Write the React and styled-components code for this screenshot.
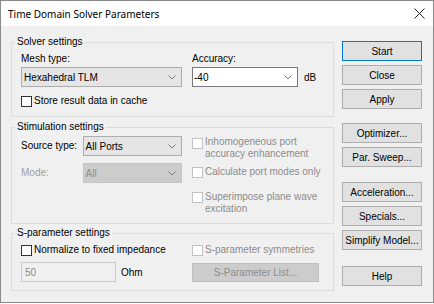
import React from "react";
import styled, { createGlobalStyle } from "styled-components";

const GlobalStyle = createGlobalStyle`
  html, body {
    margin: 0;
    padding: 0;
    background: #ffffff;
  }
  body {
    font-family: "Liberation Sans", Arial, sans-serif;
    font-size: 10px;
    color: #000;
  }
`;

const Window = styled.div`
  width: 434px;
  height: 303px;
  box-sizing: border-box;
  border: 1px solid #8a8a8a;
  background: #f0f0f0;
  display: flex;
  flex-direction: column;
`;

const TitleBar = styled.div`
  height: 25px;
  flex: none;
  background: #ffffff;
  display: flex;
  align-items: center;
  justify-content: space-between;
  padding: 0 8px 0 7px;
  font-family: "Noto Sans", "Liberation Sans", sans-serif;
  font-size: 10px;
`;

const Body = styled.div`
  flex: 1;
  display: flex;
  gap: 8px;
  padding-left: 10px;
`;

const LeftColumn = styled.div`
  width: 323px;
  padding-top: 9px;
  display: flex;
  flex-direction: column;
`;

const ButtonColumn = styled.div`
  width: 80px;
  padding-top: 15px;
  display: flex;
  flex-direction: column;
`;

const Group = styled.fieldset`
  margin: ${(p) => p.$top || 0}px 0 0 0;
  padding: 0;
  border: 1px solid #dcdcdc;
  min-inline-size: 0;
`;

const Legend = styled.legend`
  margin-left: 3px;
  padding: 0 2px;
  line-height: 14px;
`;

const GroupBody = styled.div`
  display: grid;
  grid-template-columns: 161px 1fr;
  column-gap: 10px;
  padding: ${(p) => p.$pad};
`;

const Label = styled.div`
  line-height: 14px;
  color: ${(p) => (p.$disabled ? "#a0a0a0" : "#000")};
  white-space: nowrap;
`;

const Row = styled.div`
  display: flex;
  align-items: center;
  gap: ${(p) => p.$gap || 0}px;
  margin-top: ${(p) => p.$top || 0}px;
  grid-column: ${(p) => (p.$span ? "1 / -1" : "auto")};
`;

const Combo = styled.div`
  box-sizing: border-box;
  width: ${(p) => p.$w}px;
  height: 20px;
  display: flex;
  align-items: center;
  justify-content: space-between;
  padding: 0 5px 0 ${(p) => (p.$variant === "edit" ? 1 : 2)}px;
  border: 1px solid
    ${(p) =>
      p.$variant === "edit" ? "#7a7a7a" : p.$variant === "disabled" ? "#c4c4c4" : "#adadad"};
  background: ${(p) =>
    p.$variant === "edit" ? "#ffffff" : p.$variant === "disabled" ? "#cccccc" : "#e5e5e5"};
  color: ${(p) => (p.$variant === "disabled" ? "#8c8c8c" : "#000")};
  white-space: nowrap;
`;

const TextField = styled.div`
  box-sizing: border-box;
  width: 95px;
  height: 20px;
  display: flex;
  align-items: center;
  padding-left: 3px;
  border: 1px solid #cccccc;
  background: #f0f0f0;
  color: #8c8c8c;
`;

const Check = styled.div`
  display: flex;
  align-items: flex-start;
  gap: 2px;
  margin-top: ${(p) => p.$top || 0}px;
  line-height: ${(p) => p.$lh || 14}px;
  color: ${(p) => (p.$disabled ? "#8c8c8c" : "#000")};
  white-space: nowrap;
`;

const Box = styled.span`
  flex: none;
  box-sizing: border-box;
  width: 11px;
  height: 11px;
  margin-top: ${(p) => p.$mt || 1}px;
  border: 1px solid ${(p) => (p.$disabled ? "#c2c2c2" : "#333333")};
  background: #ffffff;
`;

const ChecksColumn = styled.div`
  grid-column: 2;
  display: flex;
  flex-direction: column;
`;

const StimLeft = styled.div`
  display: flex;
  flex-direction: column;
  gap: 7px;
`;

const StimLabel = styled(Label)`
  width: 62px;
`;

const Button = styled.div`
  box-sizing: border-box;
  width: ${(p) => p.$w || 80}px;
  height: ${(p) => p.$h || 20}px;
  margin-top: ${(p) => p.$top || 0}px;
  display: flex;
  align-items: center;
  justify-content: center;
  border: 1px solid
    ${(p) => (p.$focus ? "#0078d7" : p.$disabled ? "#bfbfbf" : "#adadad")};
  background: ${(p) => (p.$disabled ? "#cccccc" : "#e1e1e1")};
  color: ${(p) => (p.$disabled ? "#8c8c8c" : "#000")};
  white-space: nowrap;
`;

const Chevron = () => (
  <svg width="8" height="5" viewBox="0 0 8 5">
    <polyline points="0.5,0.5 4,4 7.5,0.5" fill="none" stroke="#7a7a7a" strokeWidth="1" />
  </svg>
);

const CloseIcon = () => (
  <svg width="11" height="11" viewBox="0 0 11 11">
    <path d="M0.5 0.5 L10.5 10.5 M10.5 0.5 L0.5 10.5" stroke="#222" strokeWidth="1" />
  </svg>
);

export default function App() {
  return (
    <>
      <GlobalStyle />
      <Window>
        <TitleBar>
          <span>Time Domain Solver Parameters</span>
          <CloseIcon />
        </TitleBar>
        <Body>
          <LeftColumn>
            <Group>
              <Legend>Solver settings</Legend>
              <GroupBody $pad="3px 0 8px 9px">
                <Label>Mesh type:</Label>
                <Label>Accuracy:</Label>
                <Row $top={1}>
                  <Combo $w={161}>
                    Hexahedral TLM
                    <Chevron />
                  </Combo>
                </Row>
                <Row $top={1} $gap={6}>
                  <Combo $w={106} $variant="edit">
                    -40
                    <Chevron />
                  </Combo>
                  <span>dB</span>
                </Row>
                <Row $span $top={7}>
                  <Check>
                    <Box $mt={2} />
                    Store result data in cache
                  </Check>
                </Row>
              </GroupBody>
            </Group>

            <Group $top={3}>
              <Legend>Stimulation settings</Legend>
              <GroupBody $pad="2px 0 9px 9px">
                <StimLeft>
                  <Row>
                    <StimLabel>Source type:</StimLabel>
                    <Combo $w={100}>
                      All Ports
                      <Chevron />
                    </Combo>
                  </Row>
                  <Row>
                    <StimLabel $disabled>Mode:</StimLabel>
                    <Combo $w={100} $variant="disabled">
                      All
                      <Chevron />
                    </Combo>
                  </Row>
                </StimLeft>
                <ChecksColumn>
                  <Check $disabled $lh={11.5}>
                    <Box $disabled $mt={2} />
                    <span>
                      Inhomogeneous port
                      <br />
                      accuracy enhancement
                    </span>
                  </Check>
                  <Check $disabled $lh={11.5} $top={7}>
                    <Box $disabled $mt={1} />
                    Calculate port modes only
                  </Check>
                  <Check $disabled $lh={11.5} $top={13}>
                    <Box $disabled $mt={1} />
                    <span>
                      Superimpose plane wave
                      <br />
                      excitation
                    </span>
                  </Check>
                </ChecksColumn>
              </GroupBody>
            </Group>

            <Group $top={2}>
              <Legend>S-parameter settings</Legend>
              <GroupBody $pad="3px 0 8px 9px">
                <Check>
                  <Box $mt={2} />
                  Normalize to fixed impedance
                </Check>
                <Check $disabled>
                  <Box $disabled $mt={2} />
                  S-parameter symmetries
                </Check>
                <Row $top={5} $gap={5}>
                  <TextField>50</TextField>
                  <span>Ohm</span>
                </Row>
                <Row $top={5}>
                  <Button $w={127} $h={19} $disabled>
                    S-Parameter List...
                  </Button>
                </Row>
              </GroupBody>
            </Group>
          </LeftColumn>

          <ButtonColumn>
            <Button $focus>Start</Button>
            <Button $top={4}>Close</Button>
            <Button $top={4}>Apply</Button>
            <Button $top={14}>Optimizer...</Button>
            <Button $top={4}>Par. Sweep...</Button>
            <Button $top={15}>Acceleration...</Button>
            <Button $top={4}>Specials...</Button>
            <Button $top={4}>Simplify Model...</Button>
            <Button $top={16}>Help</Button>
          </ButtonColumn>
        </Body>
      </Window>
    </>
  );
}
